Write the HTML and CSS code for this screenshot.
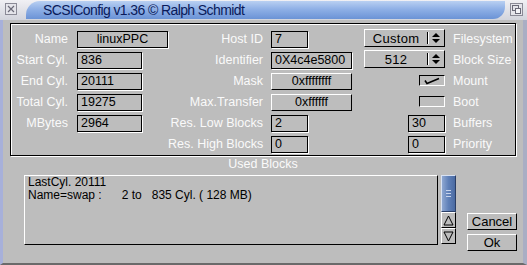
FILE: index.html
```html
<!DOCTYPE html>
<html lang="en">
<head>
    <meta charset="UTF-8">
    <title>SCSIConfig</title>
    <link rel="stylesheet" href="styles.css">
</head>
<body>
    <div class="window">
        <div class="titlebar">
            <div class="gadget close">
                <svg width="12" height="12" viewBox="0 0 12 12">
                    <rect x="0.5" y="0.5" width="11" height="11" fill="#e4e4ea" stroke="#8a8a96"/>
                    <path d="M3 3 L9 9 M9 3 L3 9" stroke="#6a6a78" stroke-width="1.2"/>
                </svg>
            </div>
            <div class="title-tab">
                <span class="title-text">SCSIConfig v1.36 &copy; Ralph Schmidt</span>
            </div>
            <div class="gadget depth">
                <svg width="13" height="13" viewBox="0 0 13 13">
                    <rect x="0.5" y="0.5" width="12" height="12" fill="#e4e4ea" stroke="#8a8a96"/>
                    <rect x="2.5" y="2.5" width="6" height="5" fill="none" stroke="#6a6a78"/>
                    <rect x="5.5" y="5.5" width="5" height="5" fill="#f4f4f8" stroke="#6a6a78"/>
                </svg>
            </div>
        </div>

        <div class="group">
            <div class="grid">
                <!-- row 1 -->
                <div class="label">Name</div>
                <div class="cell"><div class="field wide center">linuxPPC</div></div>
                <div class="label mid">Host ID</div>
                <div class="cell"><div class="field tiny">7</div></div>
                <div class="cell right"><div class="cycle"><span class="cycle-text">Custom</span><span class="cycle-arrows"><svg width="8" height="10" viewBox="0 0 8 10"><path d="M4 0 L8 4 L0 4 Z M0 6 L8 6 L4 10 Z" fill="#000"/></svg></span></div></div>
                <div class="label side">Filesystem</div>

                <!-- row 2 -->
                <div class="label">Start Cyl.</div>
                <div class="cell"><div class="field">836</div></div>
                <div class="label mid">Identifier</div>
                <div class="cell"><div class="field full">0X4c4e5800</div></div>
                <div class="cell right"><div class="cycle"><span class="cycle-text">512</span><span class="cycle-arrows"><svg width="8" height="10" viewBox="0 0 8 10"><path d="M4 0 L8 4 L0 4 Z M0 6 L8 6 L4 10 Z" fill="#000"/></svg></span></div></div>
                <div class="label side">Block Size</div>

                <!-- row 3 -->
                <div class="label">End Cyl.</div>
                <div class="cell"><div class="field">20111</div></div>
                <div class="label mid">Mask</div>
                <div class="cell"><div class="field full center raised">0xffffffff</div></div>
                <div class="cell right"><div class="check"><svg width="24" height="8" viewBox="0 0 24 8"><path d="M5 3.5 L7 6.5 L19 1.5" fill="none" stroke="#000" stroke-width="1.6"/></svg></div></div>
                <div class="label side">Mount</div>

                <!-- row 4 -->
                <div class="label">Total Cyl.</div>
                <div class="cell"><div class="field">19275</div></div>
                <div class="label mid">Max.Transfer</div>
                <div class="cell"><div class="field full center raised">0xffffff</div></div>
                <div class="cell right"><div class="check"></div></div>
                <div class="label side">Boot</div>

                <!-- row 5 -->
                <div class="label">MBytes</div>
                <div class="cell"><div class="field">2964</div></div>
                <div class="label mid">Res. Low Blocks</div>
                <div class="cell"><div class="field tiny">2</div></div>
                <div class="cell right"><div class="field tiny">30</div></div>
                <div class="label side">Buffers</div>

                <!-- row 6 -->
                <div class="label"></div>
                <div class="cell"></div>
                <div class="label mid">Res. High Blocks</div>
                <div class="cell"><div class="field tiny">0</div></div>
                <div class="cell right"><div class="field tiny">0</div></div>
                <div class="label side">Priority</div>
            </div>
        </div>

        <div class="used-title">Used Blocks</div>

        <div class="bottom">
            <div class="listbox">
                <div class="list-line">LastCyl. 20111</div>
                <div class="list-line">Name=swap :      2 to   835 Cyl. ( 128 MB)</div>
            </div>
            <div class="scrollbar">
                <div class="slider">
                    <span class="grip"></span>
                    <span class="grip"></span>
                    <span class="grip"></span>
                </div>
                <div class="arrow">
                    <svg width="11" height="11" viewBox="0 0 11 11"><path d="M5.5 1 L10 10 L1 10 Z" fill="none" stroke="#000"/></svg>
                </div>
                <div class="arrow">
                    <svg width="11" height="11" viewBox="0 0 11 11"><path d="M1 1 L10 1 L5.5 10 Z" fill="none" stroke="#000"/></svg>
                </div>
            </div>
            <div class="buttons">
                <div class="button">Cancel</div>
                <div class="button">Ok</div>
            </div>
        </div>
    </div>
</body>
</html>
```

FILE: styles.css
```css
body {
    margin: 0;
    background: #bdbdbd;
    font-family: 'Liberation Sans', Arial, sans-serif;
    font-size: 12.5px;
    overflow: hidden;
}
.window {
    width: 527px;
    height: 265px;
    box-sizing: border-box;
    background: #bdbdbd;
    border-left: 3px solid #a7b0da;
    border-right: 4px solid #a9aec4;
    border-bottom: 2px solid #6a6a6a;
    display: flex;
    flex-direction: column;
}

/* title bar */
.titlebar {
    height: 20px;
    margin-left: -3px;
    margin-right: -4px;
    display: flex;
    align-items: stretch;
    background: linear-gradient(#f0f0f4, #d2d4dc);
}
.gadget {
    width: 22px;
    display: flex;
    align-items: center;
    justify-content: center;
}
.close svg {
    margin-top: -2px;
}
.depth svg {
    margin-top: -2px;
}
.title-tab {
    flex: 1;
    margin-top: 1px;
    margin-bottom: 1px;
    margin-left: 4px;
    padding-left: 17px;
    background: linear-gradient(#b9d0f2, #8fb0e6 45%, #6b93d6);
    border-radius: 14px 0 12px 0;
    display: flex;
    align-items: center;
}
.title-text {
    color: #0a1a5a;
    font-size: 14px;
    letter-spacing: -0.6px;
}

/* main group */
.group {
    margin: 3px 0 0 7px;
    width: 506px;
    height: 133px;
    box-sizing: border-box;
    border: 1px solid #000;
    box-shadow: 1px 1px 0 #fff, inset 1px 1px 0 #fff;
    padding-top: 7px;
}
.grid {
    display: grid;
    grid-template-columns: 66px 91px 103px 81px 93px 1fr;
    grid-auto-rows: 21px;
}
.label {
    color: #fafafa;
    text-align: right;
    padding-right: 9px;
    line-height: 17px;
    white-space: nowrap;
}
.label.mid {
    padding-right: 8px;
}
.label.side {
    text-align: left;
    padding-left: 8px;
    padding-right: 0;
}
.cell {
    display: flex;
    align-items: flex-start;
}
.cell.right {
    justify-content: flex-end;
}
.field {
    width: 65px;
    height: 17px;
    box-sizing: border-box;
    border: 1px solid #000;
    box-shadow: 1px 1px 0 #fff;
    padding-left: 3px;
    line-height: 15px;
    color: #000;
    white-space: nowrap;
}
.field.wide {
    width: 91px;
}
.field.full {
    width: 81px;
}
.field.tiny {
    width: 37px;
}
.field.center {
    text-align: center;
    padding-left: 0;
}
.field.raised {
    border-color: #fff #000 #000 #fff;
    box-shadow: none;
}
.cycle {
    width: 81px;
    height: 18px;
    margin-top: -2px;
    box-sizing: border-box;
    border: 1px solid;
    border-color: #fff #000 #000 #fff;
    display: flex;
    align-items: center;
    color: #000;
}
.cycle-text {
    flex: 1;
    text-align: center;
    font-size: 13px;
    letter-spacing: 0.3px;
}
.cycle-arrows {
    width: 16px;
    height: 12px;
    border-left: 1px solid #000;
    box-shadow: inset 1px 0 0 #fff;
    display: flex;
    align-items: center;
    justify-content: center;
}
.check {
    width: 26px;
    height: 11px;
    margin-top: 2px;
    box-sizing: border-box;
    border: 1px solid;
    border-color: #000 #fff #fff #000;
    display: flex;
    align-items: center;
}

/* used blocks */
.used-title {
    color: #fafafa;
    text-align: center;
    margin-top: 1px;
    line-height: 14px;
}
.bottom {
    display: flex;
    align-items: flex-end;
    margin: 4px 0 0 21px;
}
.listbox {
    width: 414px;
    height: 70px;
    box-sizing: border-box;
    border: 1px solid;
    border-color: #fff #000 #000 #fff;
    padding: 0 0 0 3px;
    color: #000;
}
.list-line {
    white-space: pre;
    line-height: 12.5px;
    font-size: 12px;
}
.scrollbar {
    width: 15px;
    height: 70px;
    margin-left: 3px;
    display: flex;
    flex-direction: column;
}
.slider {
    height: 37px;
    box-sizing: border-box;
    border: 1px solid;
    border-color: #d8e2f4 #2a3e66 #2a3e66 #d8e2f4;
    background: linear-gradient(90deg, #8fa8d2, #5f80b8 50%, #4a6aa2);
    display: flex;
    flex-direction: column;
    align-items: center;
    justify-content: center;
    gap: 2px;
}
.grip {
    width: 5px;
    height: 1px;
    background: #c8d4ec;
}
.arrow {
    height: 16px;
    box-sizing: border-box;
    border: 1px solid;
    border-color: #fff #000 #000 #fff;
    display: flex;
    align-items: center;
    justify-content: center;
}
.buttons {
    display: flex;
    flex-direction: column;
    gap: 4px;
    margin-left: 11px;
    margin-bottom: -6px;
}
.button {
    width: 50px;
    height: 17px;
    box-sizing: border-box;
    border: 1px solid;
    border-color: #fff #000 #000 #fff;
    text-align: center;
    line-height: 15px;
    color: #000;
    font-size: 13px;
}
```
